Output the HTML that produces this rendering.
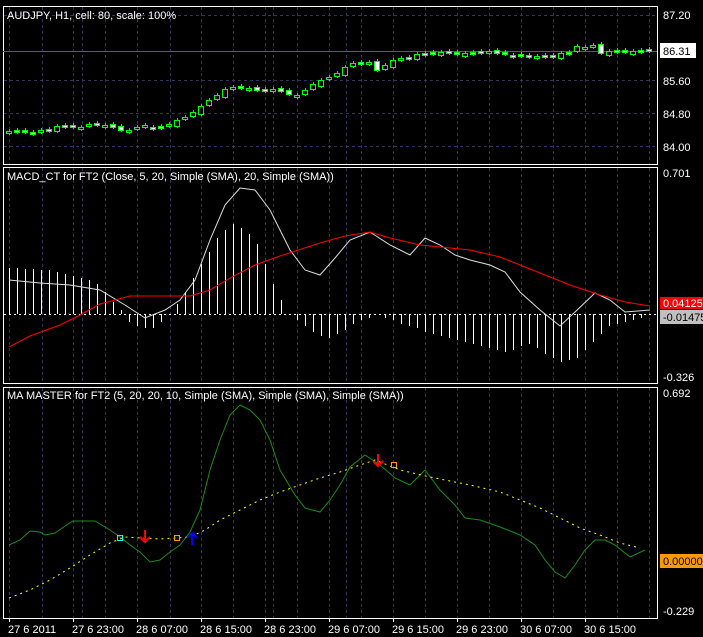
<!DOCTYPE html>
<html><head><meta charset="utf-8"><style>
body{margin:0;background:#000;width:703px;height:637px;overflow:hidden;font-family:"Liberation Sans",sans-serif;}
svg{position:absolute;left:0;top:0}
text{font-family:"Liberation Sans",sans-serif;font-size:11px;fill:#fff}
</style></head><body>
<svg id="s" width="703" height="637" xmlns="http://www.w3.org/2000/svg">
<g id="grid" stroke="#343458" stroke-dasharray="3,3" stroke-width="1"></g>
<rect x="3.5" y="6.5" width="654" height="158" fill="none" stroke="#fff"/>
<rect x="3.5" y="167.5" width="654" height="216" fill="none" stroke="#fff"/>
<rect x="3.5" y="387.5" width="654" height="231" fill="none" stroke="#fff"/>
<line x1="3" y1="51.5" x2="657" y2="51.5" stroke="#55558a"/>
<g id="candles"></g>
<g id="hist" stroke="#fff" stroke-width="1"></g>
<line x1="4" y1="314.5" x2="657" y2="314.5" stroke="#fff" stroke-dasharray="2,3"/>
<polyline id="macdW" fill="none" stroke="#ddd" stroke-width="1"/>
<polyline id="macdR" fill="none" stroke="#f00" stroke-width="1"/>
<polyline id="mg" fill="none" stroke="#1a8c1a" stroke-width="1"/>
<polyline id="my" fill="none" stroke="#ff0" stroke-width="1" stroke-dasharray="2,4"/>
<rect x="117.5" y="535.5" width="5" height="5" fill="none" stroke="#0ff"/>
<rect x="174.5" y="535.5" width="5" height="5" fill="none" stroke="#f90"/>
<rect x="391.5" y="462.5" width="5" height="5" fill="none" stroke="#f90"/>
<path d="M145 530v12M140 537l5 5 5-5" stroke="#f00" stroke-width="2" fill="none"/>
<path d="M378 454v12M373 461l5 5 5-5" stroke="#f00" stroke-width="2" fill="none"/>
<path d="M192 545v-12M187 538l5-5 5 5" stroke="#00f" stroke-width="2" fill="none"/>
<text x="7" y="19">AUDJPY, H1, cell: 80, scale: 100%</text>
<text x="7" y="180">MACD_CT for FT2 (Close, 5, 20, Simple (SMA), 20, Simple (SMA))</text>
<text x="7" y="399">MA MASTER for FT2 (5, 20, 20, 10, Simple (SMA), Simple (SMA), Simple (SMA))</text>
<g id="ax"></g>
<rect x="660" y="43" width="36" height="15" fill="#fff"/>
<text x="663" y="55" style="fill:#000">86.31</text>
<text x="663" y="19">87.20</text><text x="663" y="85">85.60</text><text x="663" y="118">84.80</text><text x="663" y="151">84.00</text>
<text x="663" y="177">0.701</text><text x="663" y="381">-0.326</text>
<rect x="660" y="297" width="43" height="12" fill="#f00"/>
<text x="663" y="307">0.04125</text>
<rect x="660" y="310" width="43" height="14" fill="#c0c0c0"/>
<text x="663" y="321" style="fill:#000">-0.01475</text>
<text x="663" y="397">0.692</text><text x="663" y="615">-0.229</text>
<rect x="660" y="554" width="43" height="14" fill="#f90"/>
<text x="663" y="565" style="fill:#000">0.00000</text>
<line x1="3" y1="618.5" x2="657" y2="618.5" stroke="#fff"/>
</svg>
<script>
var N="http://www.w3.org/2000/svg";
function el(t,a,p){var e=document.createElementNS(N,t);for(var k in a)e.setAttribute(k,a[k]);document.getElementById(p).appendChild(e);return e;}
var vx=[9,42,73,82,105,137,170,201,233,265,273,297,329,346,361,393,425,457,489,521,553,585,617,649];
vx.forEach(function(x){[[7,164],[168,383],[388,618]].forEach(function(r){el('line',{x1:x+.5,y1:r[0],x2:x+.5,y2:r[1]},'grid');});});
[15,80,113,146].forEach(function(y){el('line',{x1:4,y1:y+.5,x2:657,y2:y+.5},'grid');});
var lab=["27 6 2011","27 6 23:00","28 6 07:00","28 6 15:00","28 6 23:00","29 6 07:00","29 6 15:00","29 6 23:00","30 6 07:00","30 6 15:00"];
lab.forEach(function(l,i){var x=9+64*i;el('line',{x1:x+.5,y1:618,x2:x+.5,y2:622,stroke:'#fff'},'ax');var t=el('text',{x:x-1,y:633},'ax');t.textContent=l;});
var c=[131,131,130,132,130,129,126,126,126,127,124,124,125,127,130,130,127,125,127,126,124,120,117,112,106,100,95,89,87,87,88,90,89,89,91,94,95,90,84,80,77,73,67,63,62,62,70,65,60,58,57,54,53,53,52,53,54,53,52,51,51,53,53,55,56,56,56,56,56,53,52,46,47,45,53,51,51,52,51,50,50];
var prev=131;
c.forEach(function(y,i){var x=9+8*i;var o=prev+(i%3==0?2:-1);prev=y;var top=Math.min(o,y),h=Math.max(2,Math.abs(o-y));
el('line',{x1:x+.5,y1:top-2,x2:x+.5,y2:top+h+2,stroke:'#0f0'},'candles');
el('rect',{x:x-2.5,y:top+.5,width:5,height:h,fill:(o>y?'#000':'#fff'),stroke:'#0f0'},'candles');});
var hv=[-46,-46,-45,-45,-44,-44,-42,-40,-38,-36,-34,-30,-22,-12,-4,8,12,14,14,8,0,-10,-22,-36,-50,-62,-76,-84,-90,-86,-80,-70,-50,-30,-14,-2,6,12,18,22,24,20,16,10,6,4,-2,4,6,10,12,14,18,20,22,24,26,28,30,32,34,36,38,36,32,30,34,40,44,48,46,44,36,28,20,12,10,8,6,4,2];
hv.forEach(function(v,i){var x=9+8*i;if(Math.abs(v)>2)el('line',{x1:x+.5,y1:314,x2:x+.5,y2:314+v,stroke:'#fff'},'hist');});
document.getElementById('macdW').setAttribute('points',"9,280 40,283 70,285 100,290 125,305 145,318 165,310 180,300 195,280 210,240 225,205 240,188 255,190 270,210 290,250 305,270 320,275 335,258 350,240 370,232 390,245 410,255 425,238 440,245 455,255 470,260 490,265 505,272 520,292 540,310 560,326 575,312 595,293 610,300 625,312 650,310");
document.getElementById('macdR').setAttribute('points',"9,347 30,336 60,325 80,315 100,304 130,296 190,296 210,290 230,278 255,265 280,256 320,243 345,236 370,232 390,238 420,245 470,250 500,257 520,265 545,275 570,285 600,295 625,302 650,306");
document.getElementById('mg').setAttribute('points',"9,545 20,540 30,531 40,532 45,535 55,533 65,526 73,521 95,521 110,530 120,537 130,545 140,552 150,562 160,560 170,552 180,545 190,532 200,510 210,470 220,440 230,415 240,405 250,410 260,420 270,440 280,470 295,495 305,508 320,512 330,500 340,485 350,467 365,455 380,465 395,478 410,485 425,470 440,490 455,505 465,518 480,520 500,527 520,535 535,545 545,560 555,572 565,578 575,565 585,550 595,540 605,540 615,545 630,557 645,550");
document.getElementById('my').setAttribute('points',"9,598 30,590 50,580 70,568 90,555 110,543 125,537 160,539 190,537 205,530 220,520 240,510 260,500 280,492 300,485 320,478 340,472 360,465 375,460 400,470 430,477 470,485 500,492 520,500 540,508 560,518 580,528 600,535 620,543 640,548");
</script>
</body></html>
